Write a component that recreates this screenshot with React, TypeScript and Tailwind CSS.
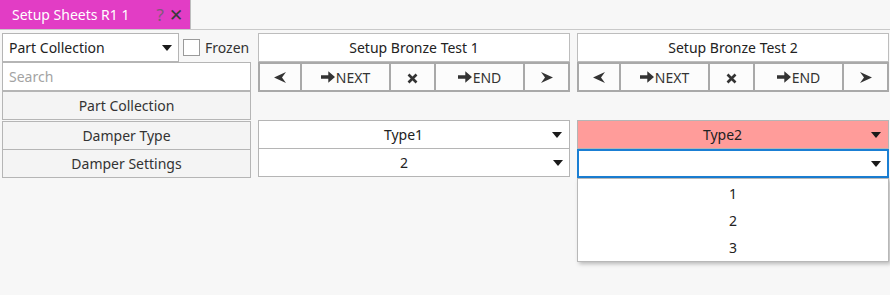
import React from "react";

const font = { fontFamily: '"Noto Sans", "Open Sans", sans-serif' };

function Caret() {
  return (
    <svg width="10" height="6" viewBox="0 0 10 6" className="shrink-0">
      <polygon points="0,0 10,0 5,6" fill="#1a1a1a" />
    </svg>
  );
}

function ArrowHead({ dir }: { dir: "left" | "right" }) {
  return (
    <svg width="12" height="11" viewBox="0 0 12 11" className={dir === "left" ? "" : "rotate-180"}>
      <polygon points="0,5.5 12,0 8,5.5 12,11" fill="#333" />
    </svg>
  );
}

function BoldArrow() {
  return (
    <svg width="14" height="12" viewBox="0 0 14 12" className="mr-[1px]">
      <path d="M0 4.3h7.3V0.3L14 6l-6.7 5.7v-4H0z" fill="#333" />
    </svg>
  );
}

function BoldX() {
  return (
    <svg width="11" height="11" viewBox="0 0 11 11">
      <path d="M1.5 1.5l8 8M9.5 1.5l-8 8" stroke="#333" strokeWidth="2.6" />
    </svg>
  );
}

function SheetColumn({ title, type, setting, open }: { title: string; type: string; setting: string; open?: boolean }) {
  return (
    <div className="relative w-[312px] flex flex-col">
      <div className="h-[29px] bg-white border border-[#bdbdbd] flex items-center justify-center text-[14px] text-[#222]">
        {title}
      </div>
      {/* Nav buttons */}
      <div className="h-[30px] flex border-2 border-[#a9a9a9] bg-[#fcfcfc] text-[14px] text-[#333]">
        <div className="w-[42px] flex items-center justify-center border-r-2 border-[#a9a9a9]">
          <ArrowHead dir="left" />
        </div>
        <div className="w-[89px] flex items-center justify-center border-r-2 border-[#a9a9a9]">
          <BoldArrow />
          NEXT
        </div>
        <div className="w-[45px] flex items-center justify-center border-r-2 border-[#a9a9a9] pt-[2px]">
          <BoldX />
        </div>
        <div className="w-[89px] flex items-center justify-center border-r-2 border-[#a9a9a9]">
          <BoldArrow />
          END
        </div>
        <div className="flex-1 flex items-center justify-center">
          <ArrowHead dir="right" />
        </div>
      </div>
      <div className="h-[28px]" />
      <div
        className={`h-[29px] border border-[#b5b5b5] flex items-center pr-[7px] text-[14px] text-[#222] ${
          open ? "bg-[#ff9c9a]" : "bg-white"
        }`}
      >
        <span className="flex-1 text-center pr-[4px]">{type}</span>
        <Caret />
      </div>
      <div
        className={`h-[29px] bg-white flex items-center pr-[6px] text-[14px] text-[#222] ${
          open ? "border-2 border-[#1a7fd4]" : "border border-[#b5b5b5] -mt-[1px]"
        }`}
      >
        <span className="flex-1 text-center pr-[4px]">{setting}</span>
        <Caret />
      </div>
      {open && (
        <div className="absolute left-0 right-0 top-[145px] h-[84px] bg-white border border-[#b8b8b8] shadow-[2px_2px_4px_rgba(0,0,0,0.25)] flex flex-col pt-[1px] text-[14px] text-[#222]">
          {["1", "2", "3"].map((n) => (
            <div key={n} className="h-[27px] flex items-center justify-center">
              {n}
            </div>
          ))}
        </div>
      )}
    </div>
  );
}

export default function App() {
  return (
    <div className="w-[890px] h-[295px] bg-[#f7f7f7] overflow-hidden" style={font}>
      {/* Tab strip */}
      <div className="h-[30px] border-b border-[#c9c9c9] flex">
        <div className="w-[191px] h-[29px] bg-[#e23dc5] border-r border-[#bdbdbd] flex items-center pl-[12px] pr-[7px]">
          <span className="flex-1 text-white text-[14px]">Setup Sheets R1 1</span>
          <span className="text-[#7d5a78] text-[17px] mr-[5px]">?</span>
          <span className="text-[#3a3a3a] text-[17px] leading-none">✕</span>
        </div>
      </div>

      <div className="flex gap-[7px] pl-[2px] pt-[3px]">
        {/* Left panel */}
        <div className="w-[249px] flex flex-col text-[14px] text-[#333]">
          <div className="h-[29px] flex items-center">
            <div className="w-[177px] h-[29px] bg-white border border-[#b5b5b5] flex items-center pl-[6px] pr-[6px] text-[#222]">
              <span className="flex-1">Part Collection</span>
              <Caret />
            </div>
            <div className="w-[17px] h-[17px] bg-white border border-[#9a9a9a] ml-[4px] mr-[5px]" />
            <span className="text-[#333]">Frozen</span>
          </div>
          <div className="h-[29px] bg-white border border-[#b5b5b5] flex items-center pl-[6px] text-[#a3a3a3]">
            Search
          </div>
          <div className="h-[29px] bg-[#f4f4f4] border border-[#b5b5b5] flex items-center justify-center">
            Part Collection
          </div>
          <div className="h-[29px] mt-[1px] bg-[#f4f4f4] border border-[#b5b5b5] flex items-center justify-center">
            Damper Type
          </div>
          <div className="h-[29px] -mt-[1px] bg-[#f4f4f4] border border-[#b5b5b5] flex items-center justify-center">
            Damper Settings
          </div>
        </div>

        <SheetColumn title="Setup Bronze Test 1" type="Type1" setting="2" />
        <SheetColumn title="Setup Bronze Test 2" type="Type2" setting="" open />
      </div>
    </div>
  );
}
